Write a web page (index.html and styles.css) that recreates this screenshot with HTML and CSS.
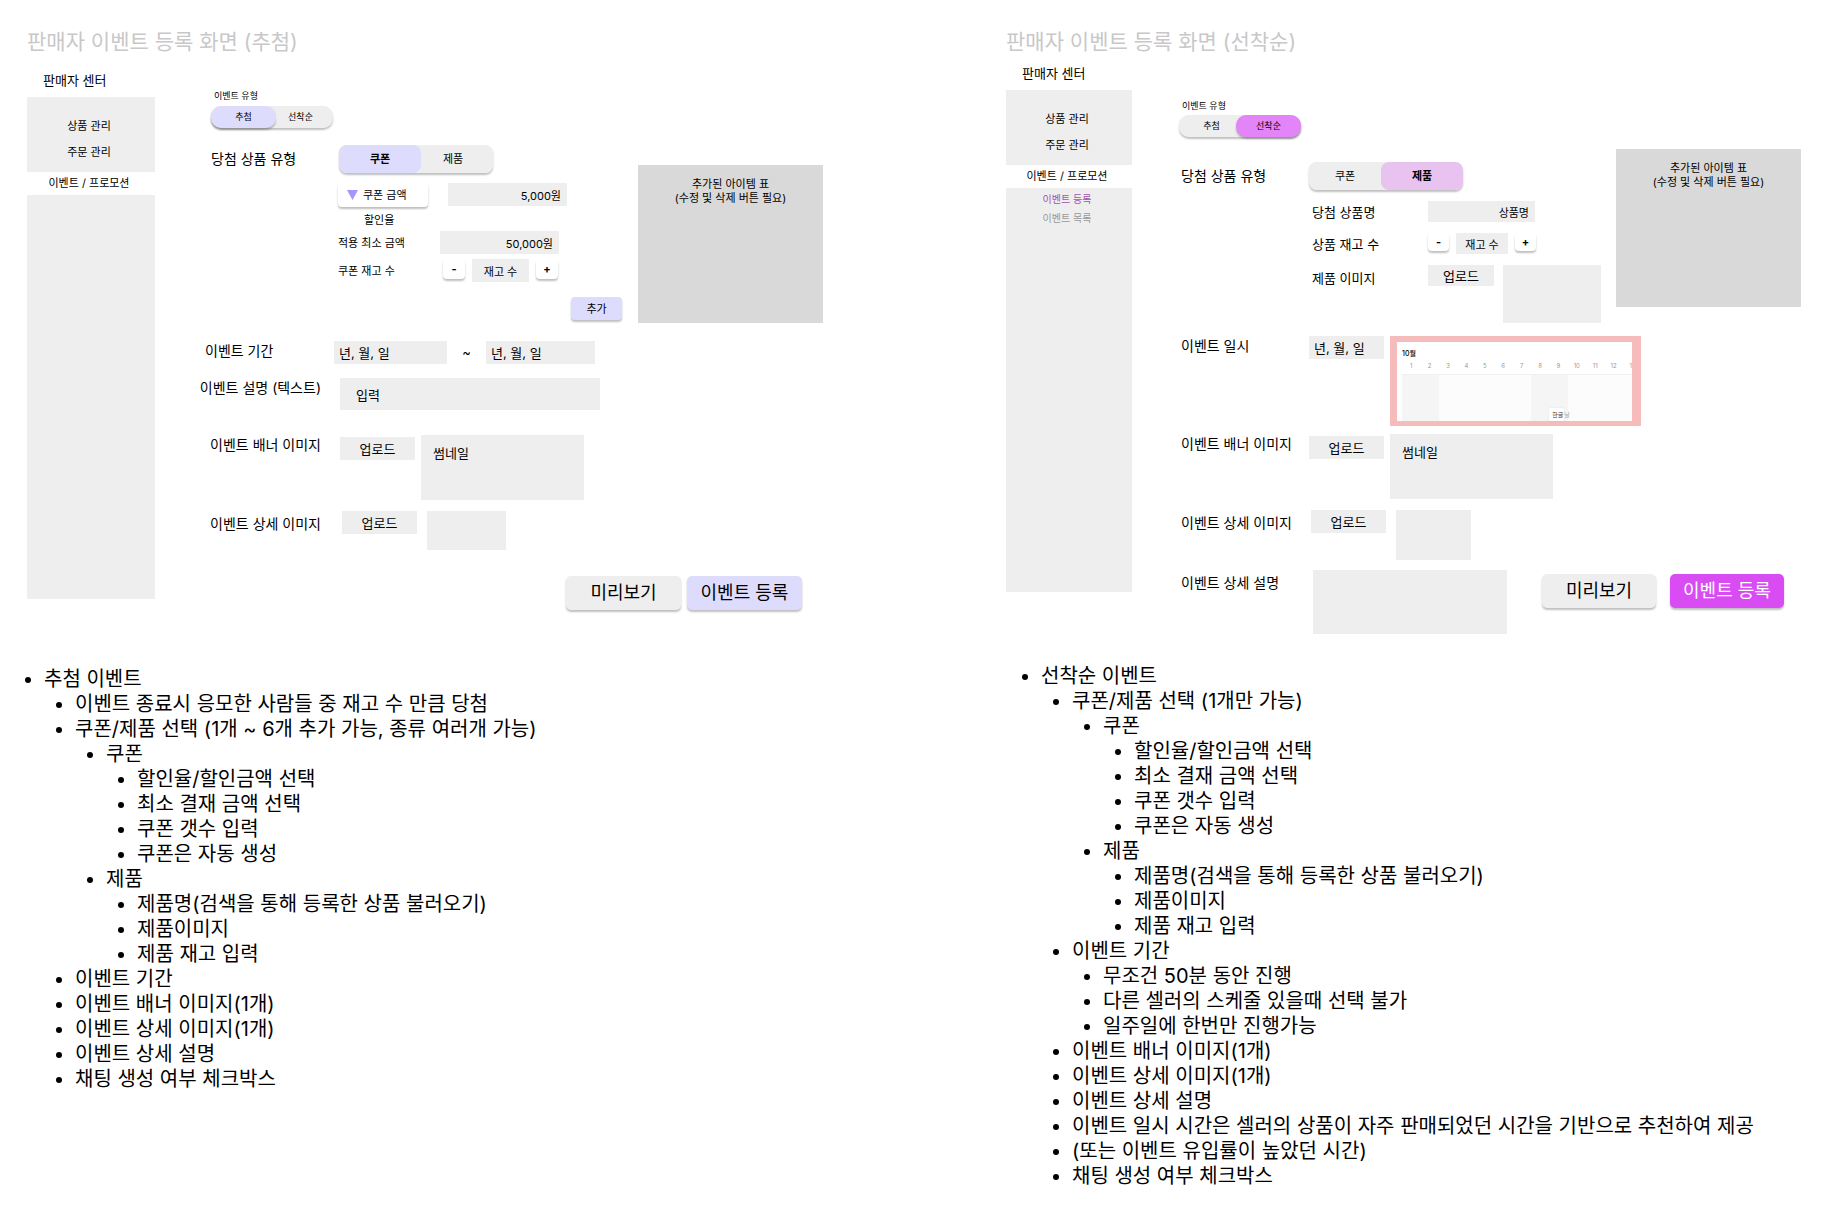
FILE: index.html
```html
<!DOCTYPE html>
<html lang="ko">
<head>
<meta charset="utf-8">
<title>판매자 이벤트 등록 화면</title>
<link rel="stylesheet" href="styles.css">
</head>
<body>
<main class="page">
  <section class="board board--draw">
    <h2 class="board-title">판매자 이벤트 등록 화면 (추첨)</h2>
    <div class="frame">
      <aside class="sidebar">
        <h3 class="brand">판매자 센터</h3>
        <nav class="menu">
          <a href="#">상품 관리</a>
          <a href="#">주문 관리</a>
        </nav>
        <a class="menu-current" href="#">이벤트 / 프로모션</a>
        <nav class="submenu"></nav>
      </aside>
      <form class="form">
        <p class="type-label">이벤트 유형</p>
        <div class="segment segment--small">
          <button type="button" class="on">추첨</button>
          <button type="button">선착순</button>
        </div>

        <div class="prize">
          <div class="prize-main">
            <div class="prize-head">
              <span class="label">당첨 상품 유형</span>
              <div class="segment">
                <button type="button" class="on">쿠폰</button>
                <button type="button">제품</button>
              </div>
            </div>
            <div class="prize-body">
              <div class="coupon-value">
                <div class="dropdown">
                  <svg class="caret" viewBox="0 0 11 10" aria-hidden="true"><path d="M0 0h11L5.500 10z" fill="#a594fb"/></svg>
                  <select aria-label="할인 방식"><option>쿠폰 금액</option><option>할인율</option></select>
                </div>
                <input class="field field--right" aria-label="쿠폰 금액" value="5,000원">
              </div>
              <p class="dropdown-option">할인율</p>
              <div class="prize-row">
                <label for="min-price">적용 최소 금액</label>
                <input class="field field--right" id="min-price" value="50,000원">
              </div>
              <div class="prize-row prize-row--stock">
                <label for="coupon-stock">쿠폰 재고 수</label>
                <div class="stepper">
                  <button type="button">-</button>
                  <input class="field" id="coupon-stock" value="재고 수">
                  <button type="button">+</button>
                </div>
              </div>
              <button type="button" class="add">추가</button>
            </div>
          </div>
          <div class="items">추가된 아이템 표<br>(수정 및 삭제 버튼 필요)</div>
        </div>

        <div class="rows">
          <div class="row row--period">
            <label class="label" for="start">이벤트 기간</label>
            <div class="period">
              <input class="date" id="start" value="년, 월, 일">
              <span>~</span>
              <input class="date" aria-label="종료일" value="년, 월, 일">
            </div>
          </div>
          <div class="row row--text">
            <label class="label" for="desc">이벤트 설명 (텍스트)</label>
            <input class="text" id="desc" value="입력">
          </div>
          <div class="row row--banner">
            <span class="label">이벤트 배너 이미지</span>
            <div class="media">
              <button type="button" class="upload">업로드</button>
              <div class="thumb thumb--banner">썸네일</div>
            </div>
          </div>
          <div class="row row--detail">
            <span class="label">이벤트 상세 이미지</span>
            <div class="media">
              <button type="button" class="upload">업로드</button>
              <div class="thumb thumb--detail"></div>
            </div>
          </div>
        </div>
        <div class="actions">
          <button type="button">미리보기</button>
          <button type="submit" class="primary">이벤트 등록</button>
        </div>
      </form>
    </div>
    <ul class="notes">
      <li>추첨 이벤트
        <ul>
          <li>이벤트 종료시 응모한 사람들 중 재고 수 만큼 당첨</li>
          <li>쿠폰/제품 선택 (1개 ~ 6개 추가 가능, 종류 여러개 가능)
            <ul>
              <li>쿠폰
                <ul>
                  <li>할인율/할인금액 선택</li>
                  <li>최소 결재 금액 선택</li>
                  <li>쿠폰 갯수 입력</li>
                  <li>쿠폰은 자동 생성</li>
                </ul>
              </li>
              <li>제품
                <ul>
                  <li>제품명(검색을 통해 등록한 상품 불러오기)</li>
                  <li>제품이미지</li>
                  <li>제품 재고 입력</li>
                </ul>
              </li>
            </ul>
          </li>
          <li>이벤트 기간</li>
          <li>이벤트 배너 이미지(1개)</li>
          <li>이벤트 상세 이미지(1개)</li>
          <li>이벤트 상세 설명</li>
          <li>채팅 생성 여부 체크박스</li>
        </ul>
      </li>
    </ul>
  </section>

  <section class="board board--first">
    <h2 class="board-title">판매자 이벤트 등록 화면 (선착순)</h2>
    <div class="frame">
      <aside class="sidebar">
        <h3 class="brand">판매자 센터</h3>
        <nav class="menu">
          <a href="#">상품 관리</a>
          <a href="#">주문 관리</a>
        </nav>
        <a class="menu-current" href="#">이벤트 / 프로모션</a>
        <nav class="submenu">
          <a class="active" href="#">이벤트 등록</a>
          <a href="#">이벤트 목록</a>
        </nav>
      </aside>
      <form class="form">
        <p class="type-label">이벤트 유형</p>
        <div class="segment segment--small">
          <button type="button">추첨</button>
          <button type="button" class="on">선착순</button>
        </div>

        <div class="prize">
          <div class="prize-main">
            <div class="prize-head">
              <span class="label">당첨 상품 유형</span>
              <div class="segment">
                <button type="button">쿠폰</button>
                <button type="button" class="on">제품</button>
              </div>
            </div>
            <div class="prize-body">
              <div class="prize-row">
                <label class="label" for="product">당첨 상품명</label>
                <input class="field field--right" id="product" value="상품명">
              </div>
              <div class="prize-row">
                <label class="label" for="product-stock">상품 재고 수</label>
                <div class="stepper">
                  <button type="button">-</button>
                  <input class="field" id="product-stock" value="재고 수">
                  <button type="button">+</button>
                </div>
              </div>
              <div class="prize-row prize-row--image">
                <span class="label">제품 이미지</span>
                <div class="product-media">
                  <button type="button" class="upload">업로드</button>
                  <div class="thumb thumb--product"></div>
                </div>
              </div>
            </div>
          </div>
          <div class="items">추가된 아이템 표<br>(수정 및 삭제 버튼 필요)</div>
        </div>

        <div class="rows">
          <div class="row row--period">
            <label class="label" for="when">이벤트 일시</label>
            <div class="schedule">
              <input class="date" id="when" value="년, 월, 일">
              <div class="calendar">
                <div class="month">10월</div>
                <div class="days">
                  <span>1</span><span>2</span><span>3</span><span>4</span><span>5</span><span>6</span><span>7</span><span>8</span><span>9</span><span>10</span><span>11</span><span>12</span><span class="last">1</span>
                </div>
                <div class="weeks">
                  <div class="weekend weekend--a"></div>
                  <div class="weekend weekend--b"></div>
                  <div class="holiday"><span>한글</span>날</div>
                </div>
              </div>
            </div>
          </div>
          <div class="row row--banner">
            <span class="label">이벤트 배너 이미지</span>
            <div class="media">
              <button type="button" class="upload">업로드</button>
              <div class="thumb thumb--banner">썸네일</div>
            </div>
          </div>
          <div class="row row--detail">
            <span class="label">이벤트 상세 이미지</span>
            <div class="media">
              <button type="button" class="upload">업로드</button>
              <div class="thumb thumb--detail"></div>
            </div>
          </div>
          <div class="row row--story">
            <label class="label" for="story">이벤트 상세 설명</label>
            <div class="story">
              <textarea id="story"></textarea>
              <div class="actions">
                <button type="button">미리보기</button>
                <button type="submit" class="primary">이벤트 등록</button>
              </div>
            </div>
          </div>
        </div>
      </form>
    </div>
    <ul class="notes">
      <li>선착순 이벤트
        <ul>
          <li>쿠폰/제품 선택 (1개만 가능)
            <ul>
              <li>쿠폰
                <ul>
                  <li>할인율/할인금액 선택</li>
                  <li>최소 결재 금액 선택</li>
                  <li>쿠폰 갯수 입력</li>
                  <li>쿠폰은 자동 생성</li>
                </ul>
              </li>
              <li>제품
                <ul>
                  <li>제품명(검색을 통해 등록한 상품 불러오기)</li>
                  <li>제품이미지</li>
                  <li>제품 재고 입력</li>
                </ul>
              </li>
            </ul>
          </li>
          <li>이벤트 기간
            <ul>
              <li>무조건 50분 동안 진행</li>
              <li>다른 셀러의 스케줄 있을때 선택 불가</li>
              <li>일주일에 한번만 진행가능</li>
            </ul>
          </li>
          <li>이벤트 배너 이미지(1개)</li>
          <li>이벤트 상세 이미지(1개)</li>
          <li>이벤트 상세 설명</li>
          <li>이벤트 일시 시간은 셀러의 상품이 자주 판매되었던 시간을 기반으로 추천하여 제공</li>
          <li>(또는 이벤트 유입률이 높았던 시간)</li>
          <li>채팅 생성 여부 체크박스</li>
        </ul>
      </li>
    </ul>
  </section>
</main>
</body>
</html>
```
FILE: styles.css
```css
* {
  box-sizing: border-box;
}

body {
  margin: 0;
  background: #fff;
  color: #000;
  font-family: Inter, "Noto Sans CJK KR", sans-serif;
  font-size: 11px;
  line-height: 16px;
}

h2, h3, p, ul {
  margin: 0;
  padding: 0;
  font-weight: 400;
}

a {
  color: inherit;
  text-decoration: none;
}

button, input, select, textarea {
  margin: 0;
  padding: 0;
  border: 0;
  border-radius: 0;
  background: #eee;
  color: inherit;
  font: inherit;
}

textarea {
  display: block;
  resize: none;
}

.page {
  display: grid;
  grid-template-columns: 979fr 869fr;
}

/* Boards */
.board {
  --accent: #dedcfc;
  --accent-small: #dedcfc;
  --accent-strong: #dedcfc;
  min-width: 0;
  padding: 29px 156px 0 27px;
}

.board--first {
  --accent: #e8c3f0;
  --accent-small: #e385f8;
  --accent-strong: #d94cf4;
  padding-right: 47px;
}

.board-title {
  color: #c8c8c8;
  font-size: 21px;
  line-height: 26px;
}

.frame {
  display: flex;
  margin-top: 14px;
}

.board--first .frame {
  margin-top: 7px;
}

/* Sidebar */
.sidebar {
  flex: 0 0 128px;
  text-align: center;
}

.board--first .sidebar {
  flex-basis: 126px;
}

.brand {
  margin-bottom: 6px;
  padding-left: 16px;
  font-size: 13px;
  line-height: 22px;
  text-align: left;
}

.menu, .submenu {
  display: flex;
  flex-direction: column;
  background: #eee;
}

.menu {
  gap: 10px;
  padding: 21px 4px 12px 0;
}

.menu-current {
  display: block;
  padding-right: 4px;
  line-height: 23px;
}

.submenu {
  gap: 3px;
  min-height: 404px;
  padding: 3px 4px 0 0;
  color: #999;
  font-size: 10px;
}

.submenu .active {
  color: #a352b0;
}

/* Form */
.form {
  flex: 1;
  min-width: 0;
  padding: 21px 0 0 43px;
}

.board--first .form {
  padding: 38px 0 0 47px;
}

.type-label {
  margin: 0 0 4px 16px;
  font-size: 9px;
  line-height: 12px;
}

.board--first .type-label {
  margin: 0 0 3px 3px;
}

.label {
  font-size: 14px;
  line-height: 20px;
  white-space: nowrap;
}

.segment {
  display: flex;
  width: 154px;
  height: 28px;
  border-radius: 8px;
  background: #eee;
  box-shadow: 0 2px 2px rgba(0, 0, 0, .25);
}

.segment button {
  flex: 1;
  border-radius: 8px;
}

.board--draw .segment button:last-child {
  padding-right: 8px;
}

.segment .on {
  flex: 0 0 82px;
  background: var(--accent);
  font-weight: 700;
}

.segment--small {
  width: 122px;
  height: 22px;
  margin-left: 13px;
  border-radius: 10px;
}

.board--first .segment--small {
  margin-left: 0;
}

.segment--small button {
  border-radius: 10px;
  font-size: 9px;
}

.board--first .segment--small button:first-child {
  padding-left: 8px;
}

.segment--small .on {
  flex-basis: 65px;
  background: var(--accent-small);
  box-shadow: 0 2px 2px rgba(0, 0, 0, .25);
  font-weight: 400;
}

/* Prize */
.prize {
  display: flex;
  gap: 16px;
  margin: 17px 0 0 13px;
}

.board--first .prize {
  gap: 15px;
  margin: 12px 0 0 2px;
}

.prize-main {
  flex: 0 0 411px;
}

.board--first .prize-main {
  flex-basis: 420px;
  padding-top: 13px;
}

.prize-head {
  display: flex;
  align-items: center;
}

.prize-head .label {
  flex: 0 0 128px;
}

.prize-body {
  display: flex;
  flex-direction: column;
  margin-left: 127px;
}

.board--first .prize-body {
  padding-left: 4px;
}

.prize-body .label {
  font-size: 13px;
}

.field {
  width: 119px;
  height: 23px;
  text-align: center;
}

.field--right {
  padding-right: 6px;
  text-align: right;
}

.coupon-value {
  display: flex;
  gap: 20px;
  margin-top: 10px;
}

.dropdown {
  display: flex;
  align-items: center;
  width: 90px;
  height: 24px;
  padding-left: 9px;
  border-radius: 4px;
  box-shadow: 0 2px 2px rgba(0, 0, 0, .25);
}

.dropdown select {
  flex: 1;
  height: 22px;
  padding-left: 5px;
  appearance: none;
  background: none;
}

.caret {
  width: 11px;
  height: 10px;
}

.dropdown-option {
  margin-top: 5px;
  padding-left: 26px;
}

.prize-row {
  display: grid;
  grid-template-columns: 102px 1fr;
  align-items: center;
  margin-top: 3px;
}

.prize-row--stock {
  grid-template-columns: 105px 1fr;
  margin-top: 5px;
}

.stepper {
  display: flex;
  gap: 7px;
}

.stepper button {
  width: 22px;
  height: 20px;
  border-radius: 4px;
  background: #fff;
  box-shadow: 0 2px 2px rgba(0, 0, 0, .25);
  font-weight: 700;
}

.stepper .field {
  width: 57px;
}

.add {
  align-self: flex-end;
  width: 51px;
  height: 23px;
  margin-top: 15px;
  border-radius: 4px;
  background: var(--accent);
  box-shadow: 0 2px 2px rgba(0, 0, 0, .25);
}

.board--first .prize-row {
  grid-template-columns: 116px 1fr;
  margin-top: 11px;
}

.board--first .field {
  width: 107px;
  height: 21px;
}

.board--first .stepper button {
  width: 21px;
  height: 18px;
}

.board--first .stepper .field {
  width: 52px;
}

.board--first .prize-row--image {
  align-items: start;
}

.prize-row--image .label {
  padding-top: 3px;
}

.product-media {
  display: flex;
  align-items: flex-start;
  justify-content: space-between;
}

.product-media .upload {
  width: 66px;
  height: 21px;
}

.items {
  flex: 1;
  height: 158px;
  margin-top: 20px;
  padding-top: 12px;
  background: #d9d9d9;
  line-height: 14px;
  text-align: center;
}

.board--first .items {
  margin-top: 0;
}

/* Field rows */
.rows {
  padding-top: 18px;
}

.board--first .rows {
  padding: 13px 0 0 2px;
}

.row {
  display: grid;
  grid-template-columns: 123px 1fr;
  align-items: start;
  column-gap: 19px;
}

.board--draw .row .label {
  text-align: right;
}

.board--draw .row--period {
  column-gap: 13px;
}

.board--draw .row--period .label {
  padding-left: 7px;
  text-align: left;
}

.board--first .row {
  grid-template-columns: 128px 1fr;
  column-gap: 0;
}

.period {
  display: grid;
  grid-template-columns: 113px 39px 109px;
  font-size: 13px;
  line-height: 22px;
  text-align: center;
}

.date {
  min-width: 0;
  height: 23px;
  padding-left: 5px;
  font-size: 13px;
}

.text {
  width: 260px;
  height: 32px;
  padding-left: 16px;
  font-size: 13px;
}

.row--text {
  margin-top: 14px;
}

.row--banner {
  margin-top: 25px;
}

.board--first .row--banner {
  margin-top: 8px;
}

.row--detail {
  margin-top: 11px;
}

.row--detail .label, .row--story .label {
  padding-top: 3px;
}

.media {
  display: flex;
  align-items: flex-start;
  gap: 6px;
}

.row--banner .upload {
  margin-top: 2px;
}

.row--detail .media {
  gap: 10px;
  padding-left: 2px;
}

.upload {
  width: 75px;
  height: 23px;
  font-size: 13px;
}

.thumb {
  background: #eee;
  font-size: 13px;
  line-height: 20px;
}

.thumb--banner {
  width: 163px;
  height: 65px;
  padding: 8px 12px;
}

.thumb--detail {
  width: 79px;
  height: 39px;
}

.board--first .thumb--detail {
  width: 75px;
  height: 50px;
}

.thumb--product {
  width: 98px;
  height: 58px;
}

/* Schedule */
.schedule {
  display: flex;
  align-items: flex-start;
  gap: 6px;
}

.schedule .date {
  width: 75px;
}

.calendar {
  width: 251px;
  height: 90px;
  padding-left: 5px;
  border: solid #f6bcbc;
  border-width: 6px 9px 5px 7px;
  font-size: 6px;
  line-height: 10px;
}

.month {
  padding-top: 7px;
  font-size: 7px;
  font-weight: 500;
}

.days {
  display: grid;
  grid-template-columns: repeat(12, 2fr) 1fr;
  padding: 2px 0 3px;
  color: #999;
  text-align: center;
}

.days .last {
  text-align: right;
}

.weeks {
  display: grid;
  grid-template-columns: repeat(25, 1fr);
  height: 47px;
  border-top: 1px solid #f0f0f0;
  background: #fcfcfc;
}

.weekend {
  grid-row: 1;
  background: #f5f5f5;
}

.weekend--a {
  grid-column: 1 / 5;
}

.weekend--b {
  grid-column: 15 / 19;
}

.holiday {
  grid-row: 1;
  grid-column: 17 / 21;
  align-self: end;
  color: #aaa;
  line-height: 13px;
  white-space: nowrap;
}

.holiday span {
  display: inline-block;
  padding: 0 1px 0 3px;
  border-radius: 1px;
  background: #fff;
  box-shadow: 0 0 1px rgba(0, 0, 0, .25);
  color: #333;
}

/* Description and actions */
.row--story {
  margin-top: 10px;
}

.story {
  display: flex;
  align-items: flex-start;
  justify-content: space-between;
  padding: 0 17px 0 4px;
}

.story textarea {
  width: 194px;
  height: 64px;
}

.actions {
  display: flex;
  justify-content: flex-end;
  gap: 6px;
  margin: 26px 21px 0 0;
}

.story .actions {
  gap: 14px;
  margin: 4px 0 0;
}

.actions button {
  width: 115px;
  height: 34px;
  border-radius: 5px;
  box-shadow: 0 2px 2px rgba(0, 0, 0, .25);
  font-size: 18px;
}

.story .actions button {
  width: 114px;
}

.actions .primary {
  background: var(--accent-strong);
}

.board--first .primary {
  color: #fff;
}

/* Notes */
.notes {
  margin: 57px 0 0 17px;
  font-size: 20px;
  line-height: 25px;
  list-style: disc;
}

.board--first .notes {
  margin: 30px -47px 0 35px;
}

.notes ul {
  padding-left: 31px;
  list-style: disc;
}
```
